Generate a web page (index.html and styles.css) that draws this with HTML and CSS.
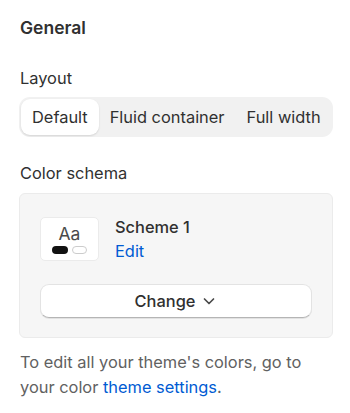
FILE: index.html
```html
<!doctype html>
<html lang="en">
<head>
    <meta charset="utf-8">
    <title>General</title>
    <link rel="stylesheet" href="styles.css">
</head>
<body>
<div class="panel">
    <h2 class="panel-title">General</h2>

    <div class="field">
        <div class="field-label">Layout</div>
        <div class="segmented">
            <button type="button" class="segment segment-active">Default</button>
            <button type="button" class="segment">Fluid container</button>
            <button type="button" class="segment">Full width</button>
        </div>
    </div>

    <div class="field">
        <div class="field-label">Color schema</div>
        <div class="scheme-card">
            <div class="scheme-row">
                <div class="scheme-preview">
                    <span class="preview-aa">Aa</span>
                    <span class="preview-dots">
                        <span class="dot dot-dark"></span>
                        <span class="dot dot-light"></span>
                    </span>
                </div>
                <div class="scheme-info">
                    <div class="scheme-name">Scheme 1</div>
                    <a class="link" href="#">Edit</a>
                </div>
            </div>
            <button type="button" class="change-button">
                Change
                <svg width="16" height="16" viewBox="0 0 16 16"><path d="M3.5 6l4.5 4.5 4.5-4.5" fill="none" stroke="#4a4a4a" stroke-width="1.7" stroke-linecap="round" stroke-linejoin="round"/></svg>
            </button>
        </div>
    </div>

    <p class="help-text">To edit all your theme's colors, go to your color <a class="link" href="#">theme settings</a>.</p>
</div>
</body>
</html>
```

FILE: styles.css
```css
body {
    margin: 0;
    background: #ffffff;
    color: #303030;
    font-family: Inter, "Noto Sans", sans-serif;
    font-size: 16.4px;
}

.panel {
    padding: 16px 17px 0 20px;
}

.panel-title {
    margin: 0 0 28px 0;
    font-size: 17.5px;
    font-weight: 600;
    line-height: 24px;
}

.field {
    margin-bottom: 26px;
}

.field-label {
    line-height: 20px;
    margin-bottom: 9px;
}

.field + .field .field-label {
    margin-bottom: 10px;
}

.segmented {
    display: flex;
    background: #f1f1f1;
    border-radius: 11px;
    padding: 2px;
    margin-left: -1px;
    height: 40px;
    box-sizing: border-box;
    overflow: hidden;
}

.segment {
    flex-shrink: 0;
    white-space: nowrap;
    border: none;
    background: transparent;
    font-family: inherit;
    font-size: 16.4px;
    color: #303030;
    padding: 0 11px;
    border-radius: 9px;
    cursor: pointer;
}

.segment-active {
    background: #ffffff;
    box-shadow: 0 1px 2px rgba(0, 0, 0, 0.12);
}

.scheme-card {
    background: #f6f6f6;
    border: 1px solid #ebebeb;
    border-radius: 6px;
    margin-left: -1px;
    padding: 23px 20px 19px 20px;
}

.scheme-row {
    display: flex;
    gap: 16px;
    margin-bottom: 23px;
}

.scheme-preview {
    width: 59px;
    height: 44px;
    box-sizing: border-box;
    background: #ffffff;
    border: 1px solid #ebebeb;
    border-radius: 5px;
    display: flex;
    flex-direction: column;
    align-items: center;
    justify-content: center;
    gap: 2px;
}

.preview-aa {
    font-size: 17.5px;
    line-height: 20px;
    color: #4a4a4a;
}

.preview-dots {
    display: flex;
    gap: 4px;
}

.dot {
    width: 16px;
    height: 8px;
    box-sizing: border-box;
    border-radius: 4px;
}

.dot-dark {
    background: #111111;
}

.dot-light {
    width: 15px;
    background: #ffffff;
    border: 1px solid #cccccc;
}

.scheme-info {
    display: flex;
    flex-direction: column;
    gap: 4px;
}

.scheme-name {
    font-weight: 500;
    line-height: 20px;
}

.link {
    color: #005bd3;
    text-decoration: none;
    line-height: 20px;
}

.change-button {
    width: 100%;
    height: 34px;
    display: flex;
    align-items: center;
    justify-content: center;
    gap: 6px;
    background: #ffffff;
    border: 1px solid #e3e3e3;
    border-bottom-color: #b5b5b5;
    border-radius: 9px;
    box-shadow: 0 1px 0 rgba(0, 0, 0, 0.08);
    font-family: inherit;
    font-size: 16.4px;
    font-weight: 500;
    color: #303030;
    cursor: pointer;
}

.help-text {
    margin: -14px 0 0 0;
    color: #616161;
    line-height: 25px;
}

.help-text .link {
    line-height: inherit;
}
```
